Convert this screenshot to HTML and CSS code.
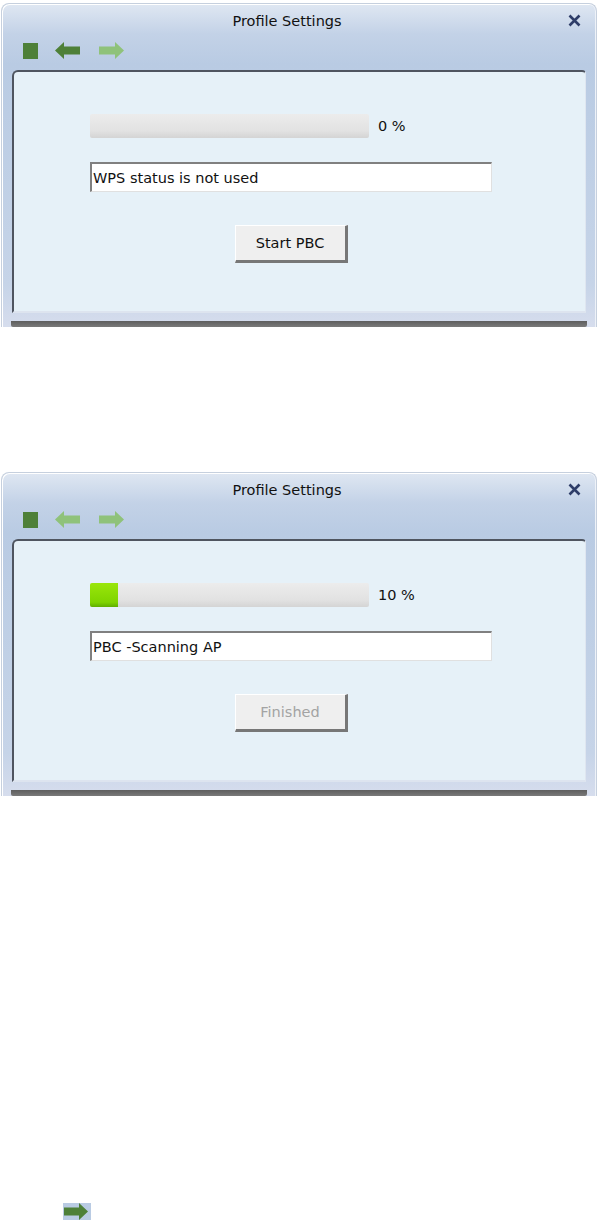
FILE: index.html
```html
<!DOCTYPE html>
<html lang="en">
<head>
    <meta charset="UTF-8">
    <title>Profile Settings - WPS</title>
    <link rel="stylesheet" href="styles.css">
</head>
<body>
    <div class="window">
        <div class="titlebar">
            <span class="title">Profile Settings</span>
            <svg class="close" width="13" height="13" viewBox="0 0 13 13"><path d="M1.5 1.5 L11.5 11.5 M11.5 1.5 L1.5 11.5" stroke="#2e3d68" stroke-width="2.6"/></svg>
        </div>
        <div class="toolbar">
            <span class="stop"></span>
            <svg class="arrow" width="26" height="17" viewBox="0 0 26 17"><path d="M0 8.5 L9 0 L9 4.5 L25 4.5 L25 12.5 L9 12.5 L9 17 Z" fill="#4e8038"/></svg>
            <svg class="arrow" width="26" height="17" viewBox="0 0 26 17"><path d="M26 8.5 L17 0 L17 4.5 L1 4.5 L1 12.5 L17 12.5 L17 17 Z" fill="#8fc27a"/></svg>
        </div>
        <div class="panel">
            <div class="wps">
                <div class="progress-row">
                    <div class="bar"></div>
                    <span class="percent">0 %</span>
                </div>
                <div class="status">WPS status is not used</div>
                <button class="btn">Start PBC</button>
            </div>
        </div>
        <div class="shadow"></div>
    </div>

    <div class="window second">
        <div class="titlebar">
            <span class="title">Profile Settings</span>
            <svg class="close" width="13" height="13" viewBox="0 0 13 13"><path d="M1.5 1.5 L11.5 11.5 M11.5 1.5 L1.5 11.5" stroke="#2e3d68" stroke-width="2.6"/></svg>
        </div>
        <div class="toolbar">
            <span class="stop"></span>
            <svg class="arrow" width="26" height="17" viewBox="0 0 26 17"><path d="M0 8.5 L9 0 L9 4.5 L25 4.5 L25 12.5 L9 12.5 L9 17 Z" fill="#8fc27a"/></svg>
            <svg class="arrow" width="26" height="17" viewBox="0 0 26 17"><path d="M26 8.5 L17 0 L17 4.5 L1 4.5 L1 12.5 L17 12.5 L17 17 Z" fill="#8fc27a"/></svg>
        </div>
        <div class="panel">
            <div class="wps">
                <div class="progress-row">
                    <div class="bar"><div class="fill" style="width: 10%"></div></div>
                    <span class="percent">10 %</span>
                </div>
                <div class="status">PBC -Scanning AP</div>
                <button class="btn" disabled>Finished</button>
            </div>
        </div>
        <div class="shadow"></div>
    </div>

    <div class="next-icon">
        <svg width="28" height="17" viewBox="0 0 28 17"><path d="M25 8.5 L16 0 L16 4.5 L1 4.5 L1 12.5 L16 12.5 L16 17 Z" fill="#4e8038"/></svg>
    </div>
</body>
</html>
```

FILE: styles.css
```css
body {
    margin: 0;
    background: #fff;
    font-family: "DejaVu Sans", Tahoma, sans-serif;
}
.window {
    width: 596px;
    margin: 3px 0 0 1px;
    padding: 0 10px;
    box-sizing: border-box;
    border: 1px solid #c6d0de;
    border-bottom: none;
    border-radius: 8px 8px 0 0;
    background: linear-gradient(#dfe7f2, #c3d2e7 30px, #b9cbe3 60px, #c6d4e8 280px, #d6dded);
    box-shadow: inset 1px 1px 0 #fff, inset -1px 0 0 #eef2f8;
}
.second {
    margin-top: 145px;
}
.titlebar {
    height: 27px;
    display: flex;
    align-items: center;
    justify-content: center;
    padding-right: 24px;
    position: relative;
}
.title {
    font-size: 14.5px;
    color: #111;
    margin-top: 6px;
}
.close {
    position: absolute;
    right: 5px;
    top: 10px;
}
.toolbar {
    height: 39px;
    display: flex;
    align-items: center;
    gap: 17px;
    padding-left: 11px;
}
.stop {
    width: 15px;
    height: 16px;
    background: #4e8038;
}
.panel {
    height: 243px;
    background: #e6f1f8;
    border-top: 2px solid #4f5560;
    border-left: 2px solid #4f5560;
    border-right: 1px solid #dfe6f0;
    border-bottom: 2px solid #dde4ef;
    border-radius: 6px 4px 0 0;
    padding: 42px 0 0 76px;
    box-sizing: border-box;
}
.shadow {
    height: 6px;
    margin: 8px -1px 0 -1px;
    background: linear-gradient(#5e5e5e, #7a7a7a);
    border-radius: 0 0 2px 2px;
}
.wps {
    width: 402px;
    display: flex;
    flex-direction: column;
}
.progress-row {
    display: flex;
    align-items: center;
    height: 24px;
}
.bar {
    width: 279px;
    height: 24px;
    background: linear-gradient(#ececec, #e2e2e2 70%, #d4d4d4);
    border-radius: 2px;
}
.fill {
    height: 100%;
    background: linear-gradient(#9ae60a, #7fd400 80%, #5fae00);
    border-radius: 2px 0 0 2px;
}
.percent {
    margin-left: 9px;
    font-size: 14.5px;
    color: #111;
}
.status {
    margin-top: 24px;
    height: 30px;
    box-sizing: border-box;
    background: #fff;
    border-top: 2px solid #808080;
    border-left: 2px solid #808080;
    border-right: 1px solid #e0e0e0;
    border-bottom: 1px solid #e0e0e0;
    font-size: 14.5px;
    line-height: 28px;
    padding-left: 1px;
    color: #111;
}
.btn {
    align-self: center;
    margin-top: 33px;
    width: 113px;
    height: 38px;
    background: #efefef;
    border: none;
    border-top: 1px solid #fff;
    border-left: 1px solid #fff;
    border-right: 3px solid #777;
    border-bottom: 3px solid #777;
    font-family: "DejaVu Sans", Tahoma, sans-serif;
    font-size: 14.5px;
    color: #111;
    padding: 0;
}
.btn:disabled {
    color: #a3a3a3;
}
.next-icon {
    width: 28px;
    height: 17px;
    margin: 407px 0 0 63px;
    background: #b9cbe3;
}
.next-icon svg {
    display: block;
}
```
